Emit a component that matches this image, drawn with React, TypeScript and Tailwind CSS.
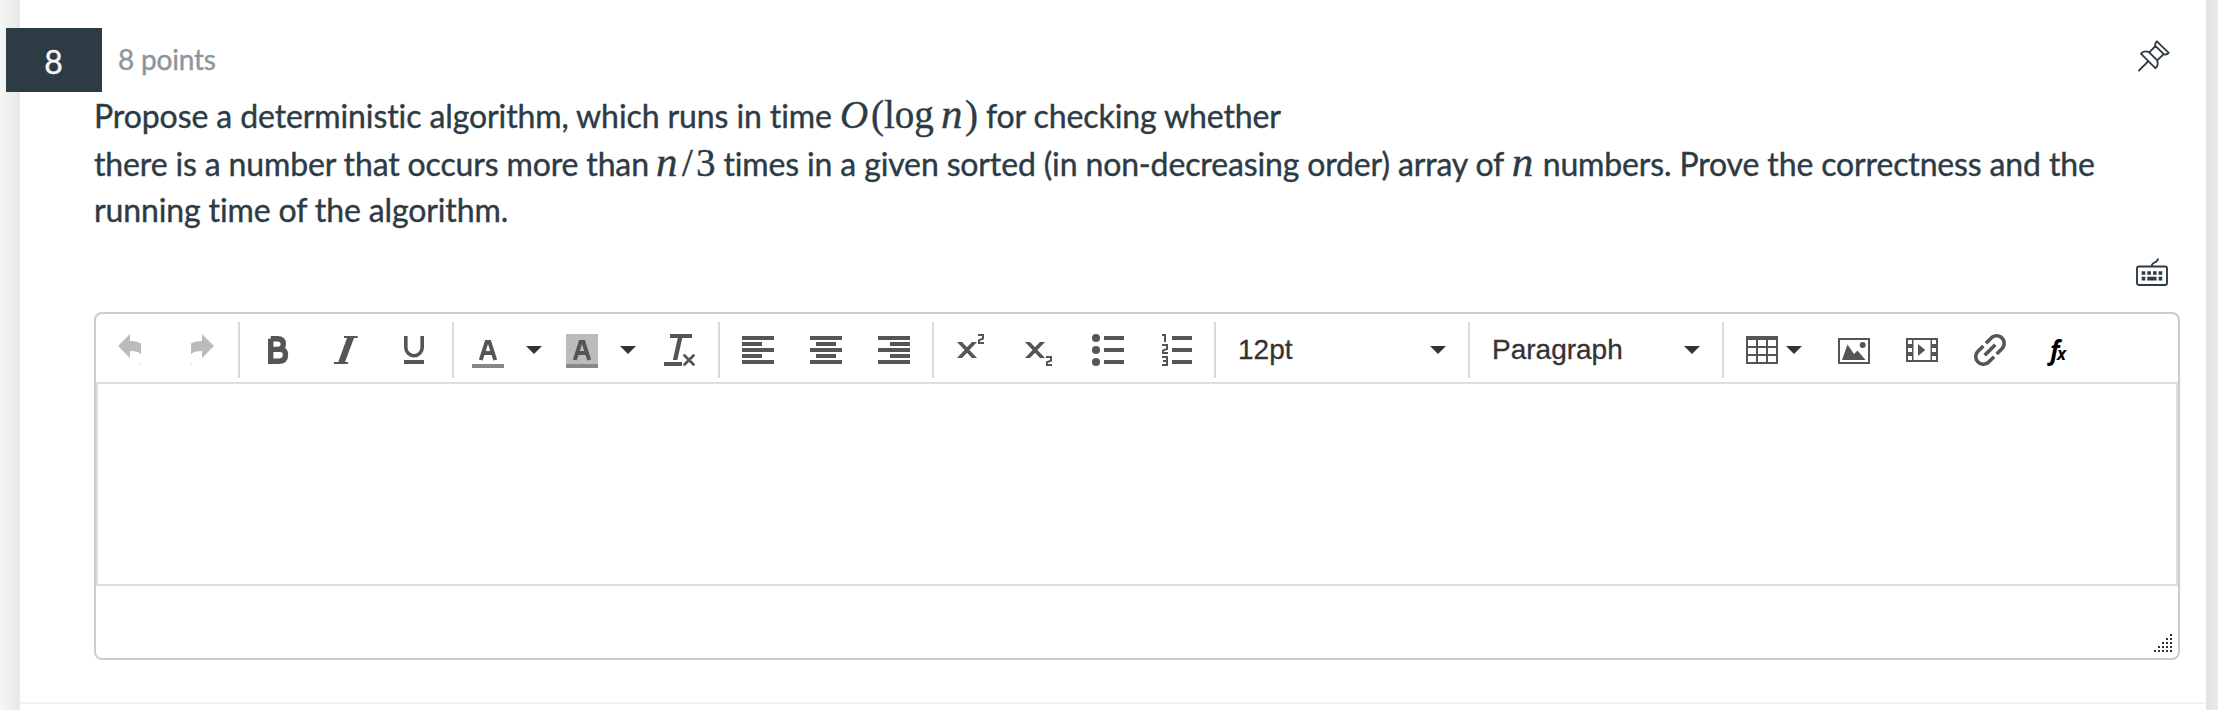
import type { ReactNode } from "react";

function Icon({ children, className = "" }: { children: ReactNode; className?: string }) {
  return (
    <svg viewBox="0 0 32 32" fill="currentColor" className={`block size-8 shrink-0 overflow-visible ${className}`}>
      {children}
    </svg>
  );
}

function Group({ children, className = "" }: { children: ReactNode; className?: string }) {
  return <div className={`flex h-14 shrink-0 items-center border-l-2 border-[#d9d9d9] ${className}`}>{children}</div>;
}

function Caret({ className = "" }: { className?: string }) {
  return (
    <svg viewBox="0 0 16 8" className={`block h-2 w-4 shrink-0 ${className}`} fill="#333">
      <path d="M0 0h16L8 8z" />
    </svg>
  );
}

const UNDO = "M2 12 14 0v7Q21 6.5 25 9.5V20Q21 16.5 14 17v7z";

function Bars({ x }: { x: number }) {
  return <path d={`M0 2h32v4H0zM${x} 8h20v4h-20zM0 14h32v4H0zM${x} 20h20v4h-20zM0 26h32v4H0z`} />;
}

function LetterA() {
  return <path d="M8.8 26 14.6 8h2.8l5.8 18M10.5 19h11" fill="none" stroke="currentColor" strokeWidth="4" />;
}

function ListLines() {
  return <path d="M12 2h20v4H12zM12 14h20v4H12zM12 26h20v4H12z" />;
}

function Toolbar() {
  return (
    <div className="flex h-[68px] shrink-0 items-center pt-1 text-[#555]">
      <div className="flex w-[142px] shrink-0 gap-9 pl-5 text-[#bbb]">
        <Icon><path d={UNDO} /><circle cx="24.6" cy="30.5" r=".6" /></Icon>
        <Icon><g transform="matrix(-1 0 0 1 32 0)"><path d={UNDO} /><circle cx="24.6" cy="30.5" r=".6" /></g></Icon>
      </div>
      <Group className="w-[214px] gap-9 pl-[22px]">
        <Icon>
          <path d="M8.7 4.7V27.3H16.5Q23.5 27.3 23.5 21T16.5 15.4H8.7M8.7 4.7H15.5Q21.3 4.7 21.3 10T15.5 15.4" fill="none" stroke="currentColor" strokeWidth="5.4" />
        </Icon>
        <Icon><path d="M14 2h13.7v2H24L15 28h3v2H4v-2h4.3L17 4h-3z" /></Icon>
        <Icon>
          <path d="M7.8 2v11.5a8.2 8.2 0 0 0 16.4 0V2" fill="none" stroke="currentColor" strokeWidth="3.6" />
          <path d="M6 26h20v4H6z" />
        </Icon>
      </Group>
      <Group className="w-[266px] pl-[18px]">
        <Icon><LetterA /><path d="M0 30h32v4H0z" fill="#888" /></Icon>
        <Caret className="ml-[22px]" />
        <Icon className="ml-6"><path d="M0 0h32v30H0z" fill="#bbb" /><path d="M0 30h32v4H0z" fill="#888" /><LetterA /></Icon>
        <Caret className="ml-[22px]" />
        <Icon className="ml-7">
          <path d="M6 0h22v4H18.3L13.3 26H8.8L13.8 4H6zM0 28h18v4H0z" />
          <path d="m20.5 21.5 9 9m0-9-9 9" fill="none" stroke="currentColor" strokeWidth="2.8" strokeLinecap="round" />
        </Icon>
      </Group>
      <Group className="w-[214px] gap-9 pl-[22px]">
        <Icon><Bars x={0} /></Icon>
        <Icon><Bars x={6} /></Icon>
        <Icon><Bars x={12} /></Icon>
      </Group>
      <Group className="w-[282px] gap-9 pl-[22px]">
        <Icon>
          <path d="M1 8h5l5 5.2L16 8h5l-7.6 8L21 24h-5l-5-5.2L6 24H1l7.6-8z" />
          <path d="M22 1h5v3.6l-4 1.6V9h5" fill="none" stroke="currentColor" strokeWidth="2" />
        </Icon>
        <Icon>
          <path d="M1 8h5l5 5.2L16 8h5l-7.6 8L21 24h-5l-5-5.2L6 24H1l7.6-8z" />
          <path d="M22 23h5v3.6l-4 1.6V31h5" fill="none" stroke="currentColor" strokeWidth="2" />
        </Icon>
        <Icon><circle cx="4" cy="4" r="4" /><circle cx="4" cy="16" r="4" /><circle cx="4" cy="28" r="4" /><ListLines /></Icon>
        <Icon>
          <path d="M2 1h3v7M2 11h5v4l-4 1.4V19h5M2 23h5v8H2m1-4h4" fill="none" stroke="currentColor" strokeWidth="2" />
          <ListLines />
        </Icon>
      </Group>
      <Group className="w-[254px] justify-between px-[22px] font-['Liberation_Sans',sans-serif] text-[28px] text-[#333] [-webkit-text-stroke:0.3px]">
        <span>12pt</span><Caret />
      </Group>
      <Group className="w-[254px] justify-between px-[22px] font-['Liberation_Sans',sans-serif] text-[28px] text-[#333] [-webkit-text-stroke:0.3px]">
        <span>Paragraph</span><Caret />
      </Group>
      <Group className="pl-[22px]">
        <Icon>
          <path fillRule="evenodd" d="M0 2h32v28H0zM2 6v6h8V6zM12 6v6h8V6zM22 6v6h8V6zM2 14v6h8v-6zM12 14v6h8v-6zM22 14v6h8v-6zM2 22v6h8v-6zM12 22v6h8v-6zM22 22v6h8v-6z" />
        </Icon>
        <Caret className="ml-2" />
        <Icon className="ml-9">
          <path fillRule="evenodd" d="M0 4h32v26H0zM2 6v22h28V6z" />
          <path d="M4 26 9.5 10.5 16 20l3.5-3.5L27.5 26z" /><circle cx="24.7" cy="11" r="3" />
        </Icon>
        <Icon className="ml-9">
          <path fillRule="evenodd" d="M0 4h32v24H0zM7.5 6v20h17V6zM2 6v4h4V6zM2 14v4h4v-4zM2 22v4h4v-4zM26 6v4h4V6zM26 14v4h4v-4zM26 22v4h4v-4z" />
          <path d="M12 10v12l7.3-6z" />
        </Icon>
        <Icon className="ml-9">
          <path
            transform="rotate(-45 16 16) translate(16 16) scale(1.87) translate(-12 -12)"
            d="M3.9 12c0-1.71 1.39-3.1 3.1-3.1h4V7H7c-2.76 0-5 2.24-5 5s2.24 5 5 5h4v-1.9H7c-1.71 0-3.1-1.39-3.1-3.1zM8 13h8v-2H8v2zm9-6h-4v1.9h4c1.71 0 3.1 1.39 3.1 3.1s-1.39 3.1-3.1 3.1h-4V17h4c2.76 0 5-2.24 5-5s-2.24-5-5-5z"
          />
        </Icon>
        <Icon className="ml-9 font-['Open_Sans',sans-serif] font-bold italic text-black">
          <text x="8" y="26" fontSize="26" textLength="9.5" lengthAdjust="spacingAndGlyphs">f</text>
          <text x="15" y="26" fontSize="18" textLength="9" lengthAdjust="spacingAndGlyphs">x</text>
        </Icon>
      </Group>
    </div>
  );
}

function MathText({ children, className = "" }: { children: ReactNode; className?: string }) {
  return <span className={`inline-block whitespace-nowrap font-['Liberation_Serif',serif] text-[39px] leading-[36px] tracking-normal ${className}`}>{children}</span>;
}

const DOT_ROWS = [1, 2, 3, 4, 5];

export default function App() {
  return (
    <div className="flex h-[710px] w-[2218px] overflow-hidden bg-[#f4f4f4] font-[Lato,sans-serif] text-[#2d3b45]">
      <div className="w-5 shrink-0 bg-linear-to-r from-[#f5f5f5] to-[#e8e8e8]" />
      <main className="flex w-[2186px] shrink-0 flex-col bg-white">
        <div className="flex h-[702px] shrink-0 flex-col pt-7">
          <header className="flex h-16 shrink-0 pr-9">
            <div className="-ml-[14px] flex h-16 w-24 items-center justify-center bg-[#2d3b45] pr-px pt-1 text-[32px] leading-none text-[#f5f5f5] [-webkit-text-stroke:0.4px]">8</div>
            <span className="ml-4 mt-[15px] text-[28px] leading-8 tracking-[-0.2px] text-[#8b969e] [-webkit-text-stroke:0.4px]">8 points</span>
            <svg viewBox="0 0 32 32" className="ml-auto mt-3 size-8 overflow-visible" fill="none" stroke="currentColor" strokeWidth="1.8" strokeLinecap="round" strokeLinejoin="round">
              <path d="M.9 30.7 10 21.5M2.9 13.7 17.3 28.2Q20.8 26 19.2 20.3L11.3 12.3Q6 10 2.9 13.7M11.3 12.3 17.5 6M19.2 20.3 25.8 14M17.3 5.8Q16.5 3.5 18.9 1.3L30.7 12.8Q28.5 15.2 25.8 14.2Z" />
            </svg>
          </header>
          <div className="ml-[74px] text-[32px] tracking-[-0.12px] [-webkit-text-stroke:0.4px]">
            <p className="flex h-12 items-baseline whitespace-pre leading-[48px] tracking-[-0.1px]">
              <span>Propose a deterministic algorithm, which runs in time </span>
              <MathText className="w-[138px]">
                <i className="inline-block w-[31px]">O</i>
                <span className="inline-block w-[13px]">(</span>
                <span className="inline-block w-[57px]">log</span>
                <i className="inline-block w-[24px] text-[43px]">n</i>
                <span className="inline-block w-[13px]">)</span>
              </MathText>
              <span> for checking whether</span>
            </p>
            <p className="flex h-[47px] items-baseline whitespace-pre leading-[48px] tracking-[-0.14px]">
              <span>there is a number that occurs more than </span>
              <MathText className="-ml-px"><i className="inline-block w-[23px] text-[43px]">n</i><span className="inline-block w-[17px] text-center">/</span>3</MathText>
              <span> times in a given sorted (in non-decreasing order) array of </span>
              <MathText><i className="inline-block w-[23px] text-[43px]">n</i></MathText>
              <span> numbers. Prove the correctness and the</span>
            </p>
            <p className="h-[46px] leading-[46px]">running time of the algorithm.</p>
          </div>
          <div className="flex h-[79px] shrink-0 justify-end pr-[38px] pt-[25px]">
            <svg viewBox="0 0 32 28" className="h-7 w-8" fill="currentColor">
              <rect x="1" y="8.5" width="30" height="18.5" rx="2" fill="none" stroke="currentColor" strokeWidth="1.9" />
              <path d="M15.7 8C15.5 3.5 22 5.5 22 .5" fill="none" stroke="currentColor" strokeWidth="1.8" />
              <path d="M5.7 13.2h3.6v3.6h-3.6zM11.3 13.2h3.6v3.6h-3.6zM17 13.2h3.6v3.6h-3.6zM22.6 13.2h3.6v3.6h-3.6zM5.7 18.8h3.6v3.6h-3.6zM11.3 18.8h9.3v3.6h-9.3zM22.6 18.8h3.6v3.6h-3.6z" />
            </svg>
          </div>
          <section className="ml-[74px] flex h-[348px] w-[2086px] shrink-0 flex-col rounded-lg border-2 border-[#c7cdd1] bg-white">
            <Toolbar />
            <div className="h-[204px] shrink-0 border-2 border-[#ddd]" />
            <div className="flex flex-1 items-end justify-end pb-[6px] pr-[6px]">
              <div className="flex flex-col items-end gap-[2px]">
                {DOT_ROWS.map((n) => (
                  <div key={n} className="flex gap-[2px]">
                    {Array.from({ length: n }, (_, i) => (
                      <span key={i} className="size-[2px] bg-[#333]" />
                    ))}
                  </div>
                ))}
              </div>
            </div>
          </section>
        </div>
        <div className="h-[2px] shrink-0 bg-[#f2f2f2]" />
      </main>
      <div className="w-3 shrink-0 bg-linear-to-r from-[#e2e2e2] to-[#eaeaea]" />
    </div>
  );
}
